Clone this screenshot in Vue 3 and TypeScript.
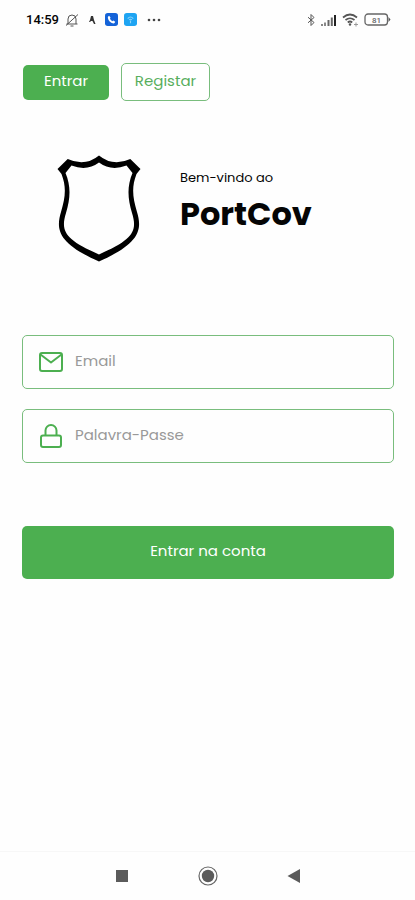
<script setup lang="ts">
import { ref } from 'vue'

type Mode = 'login' | 'register'

const mode = ref<Mode>('login')
const email = ref('')
const password = ref('')
</script>

<template>
  <div class="screen">
    <header class="status">
      <div class="status-group">
        <time class="clock">14:59</time>
        <svg class="bell" viewBox="0 0 14 14" aria-hidden="true">
          <path d="M3 11V6a4 4 0 0 1 8 0v5M1.500 11h11M5.500 13h3M1 12.500 13 1.500" />
        </svg>
        <svg class="runner" viewBox="0 0 8 10" aria-hidden="true">
          <path d="M3 1h2l1 4 1.500 4H6L4.500 6 3 6 2 7H1l1-2z" />
        </svg>
        <svg class="app-badge" viewBox="0 0 14 14" aria-hidden="true">
          <rect width="14" height="14" rx="3" fill="#1463d8" />
          <path d="M4.500 3 6 5.200 5.300 6.300Q6.200 8 7.800 8.800L9 8l2 1.500Q10.500 11.300 9 11.200 4 10 3 5 3 3.500 4.500 3z" fill="#fff" />
        </svg>
        <svg class="app-badge" viewBox="0 0 14 14" aria-hidden="true">
          <rect width="14" height="14" rx="3" fill="#1ea4f2" />
          <path d="M4 6Q7 2.500 10 6M5.500 7.500Q7 6 8.500 7.500M7 8v3" fill="none" stroke="#8bd3fb" stroke-width="1.200" />
        </svg>
        <svg class="more" viewBox="0 0 14 4" aria-hidden="true">
          <circle cx="2" cy="2" r="1.300" /><circle cx="7" cy="2" r="1.300" /><circle cx="12" cy="2" r="1.300" />
        </svg>
      </div>
      <div class="status-group system">
        <svg class="bluetooth" viewBox="0 0 8 14" aria-hidden="true">
          <path d="M1 4.200 7 9.500 4 12.500V1.500L7 4.500 1 9.800" />
        </svg>
        <svg class="signal" viewBox="0 0 17 12" aria-hidden="true">
          <path d="M1 10h2v2H1zM4 8.500h2V12H4z" fill="#888" />
          <path d="M7.500 6h2v6h-2zM10.800 3.500h2V12h-2z" fill="#666" />
          <path d="M14 1h2v11h-2z" fill="#222" />
        </svg>
        <svg class="wifi" viewBox="0 0 17 14" aria-hidden="true">
          <path d="M1 4.500Q8 -1.500 15 4.500M3.500 7Q8 3.500 12.500 7M5.800 9.500Q8 7.500 10.200 9.500" fill="none" stroke="#555" stroke-width="1.700" />
          <circle cx="8" cy="11.500" r="1.200" fill="#555" />
          <path d="M14 9.500v4M12 11.500h4" stroke="#999" />
        </svg>
        <svg class="battery" viewBox="0 0 27 13" aria-hidden="true">
          <rect x="1" y="1" width="22.500" height="11" rx="3" fill="none" stroke="#666" stroke-width="1.300" />
          <path d="M24.500 4 26.500 6.500 24.500 9z" fill="#555" />
          <text x="12.500" y="9.500" text-anchor="middle">81</text>
        </svg>
      </div>
    </header>

    <main class="content">
      <div class="modes">
        <button type="button" class="mode mode-login" :aria-pressed="mode === 'login'" @click="mode = 'login'">Entrar</button>
        <button type="button" class="mode mode-register" :aria-pressed="mode === 'register'" @click="mode = 'register'">Registar</button>
      </div>

      <section class="brand">
        <svg class="shield" viewBox="0 0 84 107" aria-hidden="true">
          <path
            fill-rule="evenodd"
            d="M10.700 4Q28 12 42 .5 56 12 73.300 4L83.500 14 79.500 19C74.500 32 75.500 42 80 57 85 74 84 88 42 106.500 0 88-1 74 4 57 8.500 42 9.500 32 4.500 19L.5 14zM14.500 10.500 8.500 18C14 31 13.500 43 9 58 3 77 9 85 42 99.500 75 85 81 77 75 58 70.500 43 70 31 75.500 18L69.500 10.500Q54 16.500 42 7.500 30 16.500 14.500 10.500z"
          />
        </svg>
        <div class="welcome">
          <p class="greeting">Bem-vindo ao</p>
          <h1 class="name">PortCov</h1>
        </div>
      </section>

      <form class="form" @submit.prevent>
        <label class="field">
          <svg class="field-icon" viewBox="0 0 24 24" aria-hidden="true">
            <rect x="1" y="3" width="22" height="18" rx="2" />
            <path d="m1.500 4.500 10.500 8 10.500-8" />
          </svg>
          <input v-model="email" type="email" placeholder="Email" aria-label="Email" autocomplete="email" />
        </label>
        <label class="field">
          <svg class="field-icon" viewBox="0 0 24 24" aria-hidden="true">
            <rect x="2" y="11.500" width="20" height="11.500" rx="2" />
            <path d="M6.500 11.500V6.500a5.500 5.500 0 0 1 11 0v5" />
          </svg>
          <input v-model="password" type="password" placeholder="Palavra-Passe" aria-label="Palavra-Passe" autocomplete="current-password" />
        </label>
        <button type="submit" class="submit">Entrar na conta</button>
      </form>
    </main>

    <nav class="system-nav">
      <button type="button" aria-label="Recentes">
        <svg viewBox="0 0 22 22"><path d="M5 5h12v12H5z" /></svg>
      </button>
      <button type="button" aria-label="Início">
        <svg viewBox="0 0 22 22">
          <circle cx="11" cy="11" r="9" fill="none" stroke="#666" stroke-width="1.200" />
          <circle cx="11" cy="11" r="6.200" />
        </svg>
      </button>
      <button type="button" aria-label="Voltar">
        <svg viewBox="0 0 22 22"><path d="M4.500 11 17 4v14z" /></svg>
      </button>
    </nav>
  </div>
</template>

<style>
body {
  margin: 0;
  background: #fff;
}
</style>

<style scoped>
.screen {
  display: flex;
  flex-direction: column;
  min-height: 100vh;
  background: #fefefe;
  color: #050505;
  font-family: Poppins, Inter, "Liberation Sans", sans-serif;
}

button,
input {
  font: inherit;
}

button {
  cursor: pointer;
}

.status {
  display: flex;
  align-items: center;
  justify-content: space-between;
  height: 39px;
  padding: 0 24px 0 26px;
}

.status-group {
  display: flex;
  align-items: center;
  gap: 6px;
}

.system {
  gap: 5px;
}

.clock {
  font: 500 13px/16px Roboto, sans-serif;
}

.bell {
  width: 14px;
  height: 14px;
  fill: none;
  stroke: #555;
}

.runner {
  width: 8px;
  height: 10px;
  margin: 0 3px;
  fill: #333;
}

.app-badge {
  width: 13px;
  height: 13px;
}

.more {
  width: 14px;
  height: 4px;
  margin-left: 4px;
  fill: #444;
}

.bluetooth {
  width: 8px;
  height: 14px;
  fill: none;
  stroke: #555;
}

.signal {
  width: 17px;
  height: 12px;
}

.wifi {
  width: 17px;
  height: 14px;
}

.battery {
  width: 27px;
  height: 13px;
}

.battery text {
  fill: #666;
  font: 500 8px Roboto, sans-serif;
}

.content {
  flex: 1;
  padding: 24px 21px 24px 22px;
}

.modes {
  display: flex;
  align-items: center;
  gap: 12px;
  padding-left: 1px;
}

.mode {
  box-sizing: border-box;
  border-radius: 5px;
  font-size: 15px;
  line-height: 22px;
}

.mode-login {
  width: 86px;
  height: 35px;
  padding: 0 0 2px;
  border: 0;
  background: #4caf50;
  color: #fff;
}

.mode-register {
  width: 89px;
  height: 38px;
  padding: 0 0 2px;
  border: 1px solid #79bd7d;
  background: #fff;
  color: #58ae5d;
}

.brand {
  display: flex;
  align-items: center;
  gap: 39px;
  margin-top: 54px;
  padding-left: 35px;
}

.shield {
  width: 84px;
  height: 107px;
  flex: none;
}

.welcome {
  padding-bottom: 16px;
}

.greeting {
  margin: 0;
  font-size: 13px;
  line-height: 20px;
}

.name {
  margin: 6px 0 0;
  font-size: 32px;
  font-weight: 700;
  line-height: 40px;
}

.form {
  display: flex;
  flex-direction: column;
  gap: 20px;
  margin-top: 73px;
}

.field {
  display: flex;
  align-items: center;
  gap: 12px;
  box-sizing: border-box;
  height: 54px;
  padding: 0 16px;
  border: 1px solid #79bd7d;
  border-radius: 5px;
}

.field-icon {
  width: 24px;
  height: 24px;
  flex: none;
  fill: none;
  stroke: #4caf50;
  stroke-width: 2;
  stroke-linejoin: round;
}

.field input {
  flex: 1;
  min-width: 0;
  padding: 0 0 2px;
  border: 0;
  outline: 0;
  background: transparent;
  color: #222;
  font-size: 15px;
  line-height: 24px;
}

.field input::placeholder {
  color: #999;
  opacity: 1;
}

.submit {
  height: 53px;
  margin-top: 43px;
  padding: 0 0 4px;
  border: 0;
  border-radius: 5px;
  background: #4caf50;
  color: #fff;
  font-size: 15px;
}

.system-nav {
  display: flex;
  align-items: center;
  justify-content: center;
  gap: 64px;
  height: 48px;
  border-top: 1px solid #f7f7f7;
}

.system-nav button {
  display: flex;
  padding: 0;
  border: 0;
  background: none;
}

.system-nav svg {
  width: 22px;
  height: 22px;
  fill: #5b5b5b;
}
</style>
